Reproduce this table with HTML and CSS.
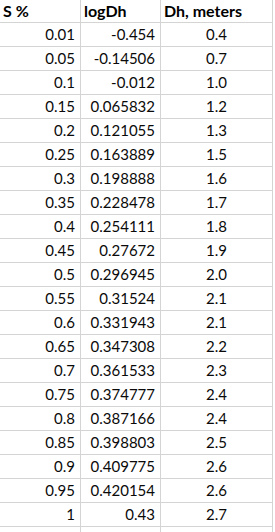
FILE: index.html
```html
<!DOCTYPE html>
<html>
<head>
<meta charset="utf-8">
<link rel="stylesheet" href="styles.css">
</head>
<body>
<div class="sheet">
  <div class="row head"><div class="c1">S %</div><div class="c2">logDh</div><div class="c3">Dh, meters</div></div>
  <div class="row"><div class="c1">0.01</div><div class="c2">-0.454</div><div class="c3">0.4</div></div>
  <div class="row"><div class="c1">0.05</div><div class="c2">-0.14506</div><div class="c3">0.7</div></div>
  <div class="row"><div class="c1">0.1</div><div class="c2">-0.012</div><div class="c3">1.0</div></div>
  <div class="row"><div class="c1">0.15</div><div class="c2">0.065832</div><div class="c3">1.2</div></div>
  <div class="row"><div class="c1">0.2</div><div class="c2">0.121055</div><div class="c3">1.3</div></div>
  <div class="row"><div class="c1">0.25</div><div class="c2">0.163889</div><div class="c3">1.5</div></div>
  <div class="row"><div class="c1">0.3</div><div class="c2">0.198888</div><div class="c3">1.6</div></div>
  <div class="row"><div class="c1">0.35</div><div class="c2">0.228478</div><div class="c3">1.7</div></div>
  <div class="row"><div class="c1">0.4</div><div class="c2">0.254111</div><div class="c3">1.8</div></div>
  <div class="row"><div class="c1">0.45</div><div class="c2">0.27672</div><div class="c3">1.9</div></div>
  <div class="row"><div class="c1">0.5</div><div class="c2">0.296945</div><div class="c3">2.0</div></div>
  <div class="row"><div class="c1">0.55</div><div class="c2">0.31524</div><div class="c3">2.1</div></div>
  <div class="row"><div class="c1">0.6</div><div class="c2">0.331943</div><div class="c3">2.1</div></div>
  <div class="row"><div class="c1">0.65</div><div class="c2">0.347308</div><div class="c3">2.2</div></div>
  <div class="row"><div class="c1">0.7</div><div class="c2">0.361533</div><div class="c3">2.3</div></div>
  <div class="row"><div class="c1">0.75</div><div class="c2">0.374777</div><div class="c3">2.4</div></div>
  <div class="row"><div class="c1">0.8</div><div class="c2">0.387166</div><div class="c3">2.4</div></div>
  <div class="row"><div class="c1">0.85</div><div class="c2">0.398803</div><div class="c3">2.5</div></div>
  <div class="row"><div class="c1">0.9</div><div class="c2">0.409775</div><div class="c3">2.6</div></div>
  <div class="row"><div class="c1">0.95</div><div class="c2">0.420154</div><div class="c3">2.6</div></div>
  <div class="row"><div class="c1">1</div><div class="c2">0.43</div><div class="c3">2.7</div></div>
  <div class="row"><div class="c1"></div><div class="c2"></div><div class="c3"></div></div>
</div>
</body>
</html>
```
FILE: styles.css
```css
html, body {
  margin: 0;
  padding: 0;
  background: #fff;
}
body {
  font-family: Lato, "Open Sans", sans-serif;
  font-size: 15px;
  color: #0a0a0a;
  overflow: hidden;
}
.sheet {
  display: flex;
  flex-direction: column;
  width: 275px;
}
.row {
  display: flex;
  height: 24px;
  line-height: 23px;
  border-bottom: 1px solid #d4d4d4;
  width: 273px;
  box-sizing: border-box;
  white-space: nowrap;
}
.row.head {
  height: 23px;
  line-height: 21px;
  font-size: 16px;
  font-weight: bold;
  color: #000;
}
.c1, .c2, .c3 {
  box-sizing: border-box;
  border-right: 1px solid #d4d4d4;
  height: 100%;
  overflow: hidden;
}
.c1 {
  width: 81px;
  text-align: right;
  padding-right: 5px;
}
.c2 {
  width: 80px;
  text-align: right;
  padding-right: 5px;
}
.c3 {
  width: 112px;
  text-align: center;
}
.head .c1, .head .c2, .head .c3 {
  text-align: left;
  padding-left: 3px;
  padding-right: 0;
}
```
